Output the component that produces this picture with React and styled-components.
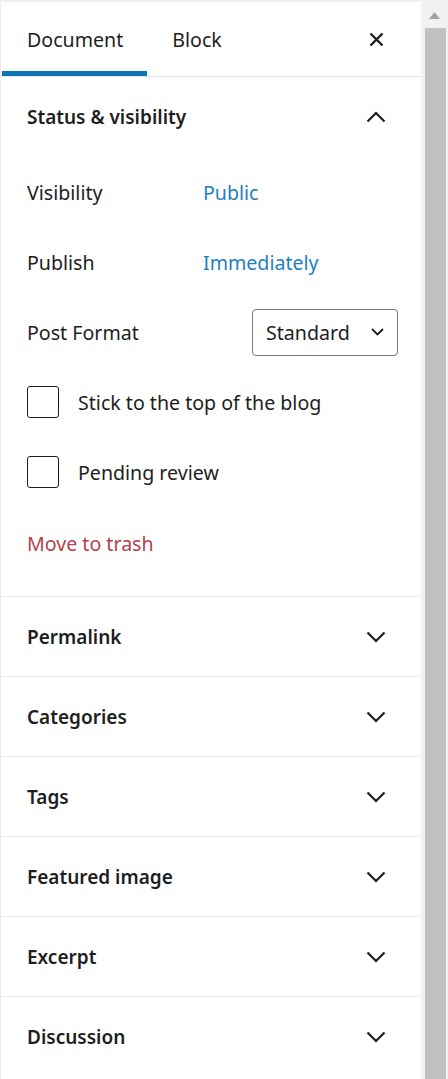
import React from 'react'
import styled, { createGlobalStyle } from 'styled-components'

const GlobalStyle = createGlobalStyle`
  html, body {
    margin: 0;
    padding: 0;
    background: #ffffff;
  }
  body {
    font-family: 'Noto Sans', 'Open Sans', sans-serif;
    color: #1e1e1e;
  }
`

const Page = styled.div`
  display: flex;
  width: 448px;
  height: 1079px;
  overflow: hidden;
  border-top: 2px solid #f0f0f0;
  box-sizing: border-box;
`

const Sidebar = styled.aside`
  flex: 1;
  display: flex;
  flex-direction: column;
  background: #ffffff;
  border-left: 1px solid #ececec;
  min-width: 0;
`

const Header = styled.div`
  display: flex;
  align-items: stretch;
  height: 75px;
  border-bottom: 1px solid #e4e4e4;
  padding-right: 27px;
  box-sizing: border-box;
`

const Tab = styled.button`
  border: none;
  background: none;
  font: inherit;
  font-size: 19.6px;
  color: #1e1e1e;
  padding: 0 24px 0 25px;
  margin: 0;
  margin-left: ${({ first }) => (first ? '1px' : '0')};
  display: flex;
  align-items: center;
  box-shadow: ${({ active }) => (active ? 'inset 0 -5px 0 #0e74b8' : 'none')};
  cursor: pointer;
`

const Spacer = styled.div`
  flex: 1;
`

const IconButton = styled.button`
  border: none;
  background: none;
  padding: 0;
  width: 36px;
  display: flex;
  align-items: center;
  justify-content: center;
  color: #1e1e1e;
  cursor: pointer;
`

const Panel = styled.section`
  border-top: ${({ first }) => (first ? 'none' : '1px solid #ebebeb')};
`

const PanelTitle = styled.div`
  height: ${({ first }) => (first ? '80px' : '79px')};
  display: flex;
  align-items: center;
  justify-content: space-between;
  padding: 0 35px 0 26px;
  font-size: 19px;
  font-weight: 600;
  color: #1e1e1e;
`

const PanelBody = styled.div`
  padding: 0 23px 17px 26px;
`

const Row = styled.div`
  height: ${({ tall }) => (tall ? '72px' : '70px')};
  display: flex;
  align-items: center;
  font-size: 19.6px;
`

const Label = styled.span`
  width: 176px;
  flex-shrink: 0;
  color: #1e1e1e;
`

const LinkText = styled.a`
  color: ${({ danger }) => (danger ? '#b8404a' : '#1f7fbf')};
  text-decoration: none;
  cursor: pointer;
`

const Select = styled.div`
  margin-left: auto;
  width: 146px;
  height: 47px;
  box-sizing: border-box;
  border: 1.5px solid #7a7a7a;
  border-radius: 4px;
  display: flex;
  align-items: center;
  justify-content: space-between;
  padding: 0 13px 0 13px;
  font-size: 19.6px;
  color: #1e1e1e;
`

const Check = styled.span`
  width: 32px;
  height: 32px;
  box-sizing: border-box;
  border: 1.5px solid #1e1e1e;
  border-radius: 3px;
  flex-shrink: 0;
  margin-right: 19px;
`

const ScrollTrack = styled.div`
  width: 27px;
  flex-shrink: 0;
  display: flex;
  flex-direction: column;
  align-items: center;
  background: #f1f1f1;
`

const ScrollArrow = styled.div`
  height: 26px;
  display: flex;
  align-items: center;
  justify-content: center;
`

const ScrollThumb = styled.div`
  flex: 1;
  width: 21px;
  margin-left: 1px;
  background: #c1c1c1;
`

const Chevron = ({ up }) => (
  <svg width="20" height="12" viewBox="0 0 20 12" fill="none">
    <path
      d={up ? 'M1.5 10.5L10 2l8.5 8.5' : 'M1.5 1.5L10 10l8.5-8.5'}
      stroke="#1e1e1e"
      strokeWidth="2.2"
    />
  </svg>
)

const SmallChevron = () => (
  <svg width="13" height="8" viewBox="0 0 13 8" fill="none">
    <path d="M1 1l5.5 5.5L12 1" stroke="#1e1e1e" strokeWidth="1.8" />
  </svg>
)

const Close = () => (
  <svg width="15" height="15" viewBox="0 0 15 15" fill="none">
    <path d="M1.5 1.5l12 12M13.5 1.5l-12 12" stroke="#1e1e1e" strokeWidth="2.4" />
  </svg>
)

const collapsed = ['Permalink', 'Categories', 'Tags', 'Featured image', 'Excerpt', 'Discussion']

const App = () => (
  <>
    <GlobalStyle />
    <Page>
      <Sidebar>
        <Header>
          <Tab first active>
            Document
          </Tab>
          <Tab>Block</Tab>
          <Spacer />
          <IconButton aria-label="Close settings">
            <Close />
          </IconButton>
        </Header>

        <Panel first>
          <PanelTitle first>
            Status &amp; visibility
            <Chevron up />
          </PanelTitle>
          <PanelBody>
            <Row>
              <Label>Visibility</Label>
              <LinkText>Public</LinkText>
            </Row>
            <Row>
              <Label>Publish</Label>
              <LinkText>Immediately</LinkText>
            </Row>
            <Row>
              <Label>Post Format</Label>
              <Select>
                Standard
                <SmallChevron />
              </Select>
            </Row>
            <Row>
              <Check />
              Stick to the top of the blog
            </Row>
            <Row>
              <Check />
              Pending review
            </Row>
            <Row tall>
              <LinkText danger>Move to trash</LinkText>
            </Row>
          </PanelBody>
        </Panel>

        {collapsed.map(title => (
          <Panel key={title}>
            <PanelTitle>
              {title}
              <Chevron />
            </PanelTitle>
          </Panel>
        ))}
      </Sidebar>
      <ScrollTrack>
        <ScrollArrow>
          <svg width="11" height="7" viewBox="0 0 11 7">
            <path d="M5.5 0L11 7H0z" fill="#a3a3a3" />
          </svg>
        </ScrollArrow>
        <ScrollThumb />
      </ScrollTrack>
    </Page>
  </>
)

export default App
